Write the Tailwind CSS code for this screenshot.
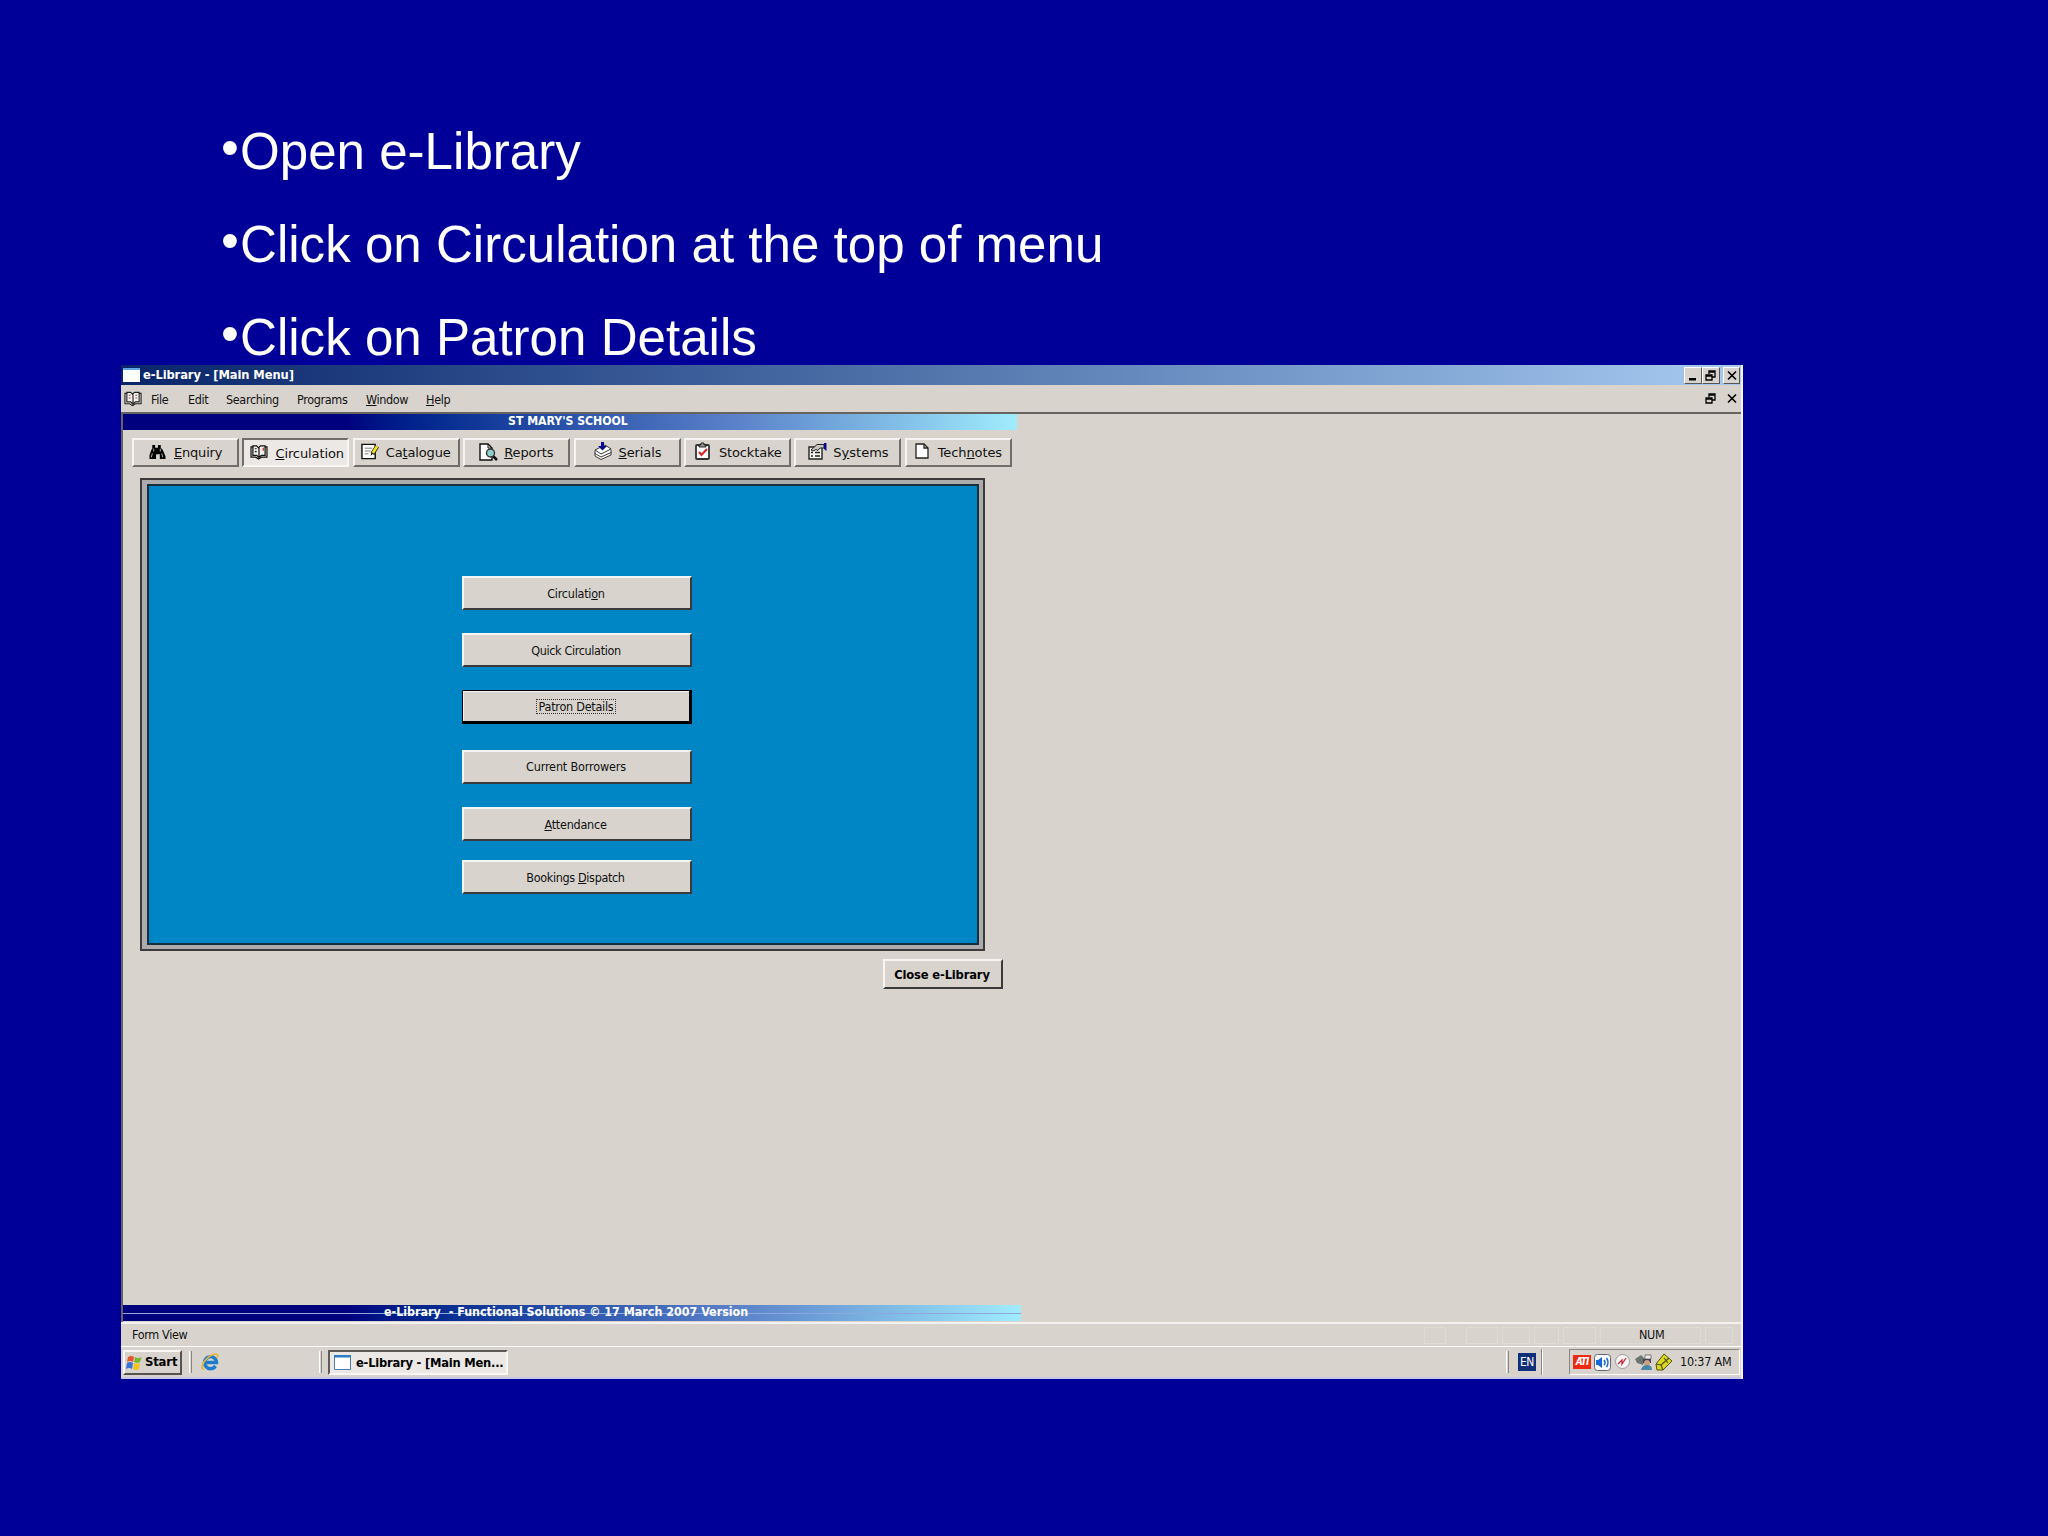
<!DOCTYPE html>
<html lang="en">
<head>
    <meta charset="UTF-8" />
    <meta name="viewport" content="width=device-width, initial-scale=1.0" />
    <title>e-Library - Patron Details</title>
    <script src="https://cdn.jsdelivr.net/npm/@tailwindcss/browser@4"></script>
</head>
<body class="bg-[#000099] w-[2048px] h-[1536px] overflow-hidden">
    <!-- Instructions -->
    <ul class="pt-[105px] pl-[222px] h-[365px] text-white text-[51.1px] leading-[93.1px] whitespace-nowrap font-['Liberation_Sans',sans-serif]">
        <li class="flex"><span class="w-[18px] -mt-[4px] -ml-px mr-px">•</span>Open e-Library</li>
        <li class="flex"><span class="w-[18px] -mt-[4px] -ml-px mr-px">•</span>Click on Circulation at the top of menu</li>
        <li class="flex"><span class="w-[18px] -mt-[4px] -ml-px mr-px">•</span>Click on Patron Details</li>
    </ul>

    <!-- Application window -->
    <div class="relative ml-[121px] w-[1622px] h-[1014px] flex flex-col bg-[#d8d4cd] border-r-2 border-r-[#f4f2f0] text-[#111] text-[12.5px] whitespace-nowrap font-['DejaVu_Sans_Condensed','DejaVu_Sans',sans-serif]">
        <!-- Title bar -->
        <header class="h-[20px] flex items-center justify-between bg-linear-to-r from-[#0a246a] to-[#a6caf0] pr-[1px] pl-[2px]">
            <div class="flex items-center">
                <svg class="w-[17px] h-[14px]" viewBox="0 0 17 14"><path fill="#fff" d="M0 0h17v14H0z"/><path fill="#5fa5e8" d="M0 0h17v2H0z"/></svg>
                <h1 class="ml-[3px] text-white font-bold text-[12.8px] leading-[18px] tracking-[-0.1px]">e-Library - [Main Menu]</h1>
            </div>
            <div class="flex">
                <div class="w-[18px] h-[17px] bg-[#d8d4cd] border border-t-white border-l-white border-r-[#555] border-b-[#555]">
                    <svg class="w-[16px] h-[15px]" viewBox="0 0 16 15"><path fill="#000" d="M4 10h7v2.500H4z"/></svg>
                </div>
                <div class="w-[18px] h-[17px] bg-[#d8d4cd] border border-t-white border-l-white border-r-[#555] border-b-[#555]">
                    <svg class="w-[16px] h-[15px]" viewBox="0 0 16 15" fill="none" stroke="#000" stroke-width="1.300"><path d="M6 6V3h6v6h-3M6 4h6M3 7h6v5H3zM3 8h6"/></svg>
                </div>
                <div class="ml-[3px] w-[17px] h-[17px] bg-[#d8d4cd] border border-t-white border-l-white border-r-[#555] border-b-[#555]">
                    <svg class="w-[15px] h-[15px]" viewBox="0 0 15 15" fill="none" stroke="#000" stroke-width="1.600"><path d="M4 3.500l8 8M12 3.500l-8 8"/></svg>
                </div>
            </div>
        </header>

        <!-- Menu bar -->
        <nav class="h-[27px] flex items-center pl-[3px] pr-[2px] tracking-[-0.35px]">
            <svg class="w-[18px] h-[16px]" viewBox="0 0 19 16" fill="#f4f2ee" stroke="#222" stroke-width="1.200"><path d="M1 2h2v-1h4l2 2 2-2h5v1h2v11h-6l-3 2-3-2H1z"/><path d="M9.500 3v12M3 2v9h4l2 2M16 2v9h-4l-2 2"/><path stroke="#a44" d="M5 4h2M5 7h2M12 4h2M12 7h2"/></svg>
            <span class="ml-[9px] mt-[3px] w-[37px]">File</span>
            <span class="mt-[3px] w-[38px]">Edit</span>
            <span class="mt-[3px] w-[71px]">Searching</span>
            <span class="mt-[3px] w-[69px]">Programs</span>
            <span class="mt-[3px] w-[60px]"><u>W</u>indow</span>
            <span class="mt-[3px]"><u>H</u>elp</span>
            <svg class="ml-auto w-[16px] h-[15px]" viewBox="0 0 16 15" fill="none" stroke="#000" stroke-width="1.300"><path d="M6 6V3h6v6h-3M6 4h6M3 7h6v5H3zM3 8h6"/></svg>
            <svg class="ml-[5px] w-[15px] h-[15px]" viewBox="0 0 15 15" fill="none" stroke="#000" stroke-width="1.600"><path d="M4 3.500l8 8M12 3.500l-8 8"/></svg>
        </nav>

        <!-- Form area -->
        <main class="h-[910px] border-t-2 border-l-2 border-[#66645f]">
            <h2 class="w-[894px] h-[16px] pl-[385px] bg-linear-to-r from-[#00007f] from-25% via-[#5a80c8] via-68% to-[#a0ecfc] text-white font-bold text-[12.2px] leading-[14px] tracking-[-0.02px]">ST MARY'S SCHOOL</h2>

            <!-- Tabs -->
            <div class="mt-[8px] ml-[9px] flex gap-[3.4px] text-[13px] leading-[27px] font-['DejaVu_Sans',sans-serif]">
                <div class="w-[107px] h-[29px] flex items-center border-2 border-t-[#f6f4f2] border-l-[#f6f4f2] border-r-[#6f6c69] border-b-[#6f6c69]">
                    <svg class="ml-[14px] -mt-[2px] w-[18px] h-[16px]" viewBox="0 0 18 17"><path d="M4 1h3v3h3V1h3v3l2 2 3 7v3h-6v-5H8v5H1v-4l2-6 1-1z"/><path stroke="#bbb" d="M5.500 5v3M12.500 5v3M4 10l-1 4M14 10l1 4"/></svg>
                    <span class="ml-[8px] tracking-[-0.2px]"><u>E</u>nquiry</span>
                </div>
                <div class="w-[107px] h-[29px] flex items-center bg-[#ebe8e5] border-2 border-t-[#6f6c69] border-l-[#6f6c69] border-r-[#f8f7f6] border-b-[#f8f7f6]">
                    <svg class="ml-[6px] w-[18px] h-[15px]" viewBox="0 0 19 16" fill="#f4f2ee" stroke="#111" stroke-width="1.300"><path d="M1 2h2v-1h4l2 2 2-2h5v1h2v11h-6l-3 2-3-2H1z"/><path d="M9.500 3v12M3 2v9h4l2 2M16 2v9h-4l-2 2M5 4h2M5 7h2"/><path stroke="#c22" d="M14 3v3"/></svg>
                    <span class="ml-[7px] mt-[2px] tracking-[-0.1px]"><u>C</u>irculation</span>
                </div>
                <div class="w-[107px] h-[29px] flex items-center border-2 border-t-[#f6f4f2] border-l-[#f6f4f2] border-r-[#6f6c69] border-b-[#6f6c69]">
                    <svg class="ml-[6px] -mt-[3px] w-[18px] h-[17px]" viewBox="0 0 19 17"><path fill="#fff" stroke="#111" stroke-width="1.500" d="M1 1h14v15H1z"/><path stroke="#777" d="M4 5h8M4 8h6M4 11h4"/><path stroke="#222" stroke-width="4.500" d="M17 3l-5 8"/><path stroke="#f2e21c" stroke-width="3" d="M17 3l-4.500 7"/><path d="M10 13l1-3 2 1z"/></svg>
                    <span class="ml-[7px] tracking-[-0.15px]">Ca<u>t</u>alogue</span>
                </div>
                <div class="w-[107px] h-[29px] flex items-center border-2 border-t-[#f6f4f2] border-l-[#f6f4f2] border-r-[#6f6c69] border-b-[#6f6c69]">
                    <svg class="ml-[14px] -mt-[2px] w-[19px] h-[18px]" viewBox="0 0 19 18"><path fill="#fff" stroke="#111" stroke-width="1.400" d="M1 1h8l4 4v12H1z"/><path fill="none" stroke="#111" d="M9 1v4h4"/><path stroke="#111" stroke-width="2.500" d="M14 13l4 4"/><circle cx="11.500" cy="10" r="4" fill="#8fd0cc" stroke="#333" stroke-width="1.400"/></svg>
                    <span class="ml-[6px] tracking-[-0.1px]"><u>R</u>eports</span>
                </div>
                <div class="w-[107px] h-[29px] flex items-center border-2 border-t-[#f6f4f2] border-l-[#f6f4f2] border-r-[#6f6c69] border-b-[#6f6c69]">
                    <svg class="ml-[18px] -mt-[3px] w-[18px] h-[18px]" viewBox="0 0 18 18"><path fill="#fff" stroke="#222" stroke-width=".9" d="M1 11v3l6 3.500L17 13v-3"/><path fill="#fff" stroke="#222" stroke-width=".9" d="M1 8.500v3L7 15l10-4.500v-3"/><path fill="#fff" stroke="#222" stroke-width=".9" d="M1 8l6 4 10-5-6-4z"/><path fill="#0a0a90" d="M7 0h3v4h3L8.500 8.500 4 4h3z"/></svg>
                    <span class="ml-[7px] tracking-[-0.1px]"><u>S</u>erials</span>
                </div>
                <div class="w-[107px] h-[29px] flex items-center border-2 border-t-[#f6f4f2] border-l-[#f6f4f2] border-r-[#6f6c69] border-b-[#6f6c69]">
                    <svg class="ml-[9px] -mt-[3px] w-[16px] h-[18px]" viewBox="0 0 16 18"><rect x="1" y="3" width="13" height="14" rx="1" fill="#fff" stroke="#333" stroke-width="1.800"/><path fill="#999" stroke="#222" d="M4 5V3h2V1h3v2h2v2z"/><path fill="none" stroke="#e02020" stroke-width="2" d="M4 10l2.500 3L12 7"/></svg>
                    <span class="ml-[8px] tracking-[-0.15px]">Stocktake</span>
                </div>
                <div class="w-[107px] h-[29px] flex items-center border-2 border-t-[#f6f4f2] border-l-[#f6f4f2] border-r-[#6f6c69] border-b-[#6f6c69]">
                    <svg class="ml-[12px] -mt-[3px] w-[19px] h-[17px]" viewBox="0 0 19 17"><path fill="#f4f4f0" stroke="#222" stroke-width="1.400" d="M1 4h13v12H1z"/><path stroke="#222" stroke-width="1.300" d="M3 9.500h2M7 9.500h5M3 13h2M7 13h5"/><path fill="#c8c6c0" stroke="#222" d="M3 7l6-5.500h7V5h-4l-2 2.500-2-1L5 8z"/><path fill="#0a0a90" d="M16 0h2.500v8L16 6z"/></svg>
                    <span class="ml-[6px]">S<u>y</u>stems</span>
                </div>
                <div class="w-[107px] h-[29px] flex items-center border-2 border-t-[#f6f4f2] border-l-[#f6f4f2] border-r-[#6f6c69] border-b-[#6f6c69]">
                    <svg class="ml-[8px] -mt-[3px] w-[14px] h-[16px]" viewBox="0 0 14 16"><path fill="#fff" stroke="#222" stroke-width="1.300" d="M1 1h8l4 4v10H1z"/><path fill="none" stroke="#222" stroke-width="1.300" d="M9 1v4h4"/></svg>
                    <span class="ml-[9px] tracking-[-0.1px]">Tech<u>n</u>otes</span>
                </div>
            </div>

            <!-- Circulation panel -->
            <div class="mt-[11px] ml-[17px] w-[845px] h-[473px] border-2 border-[#3c3a3a] bg-[#aeabac] pl-[5px] pr-[4px] pt-[4px] pb-[4px]">
                <div class="h-full border-2 border-[#15303c] bg-[#0086c4] flex flex-col pl-[313px] pt-[90px] text-center leading-[30px] tracking-[-0.25px]">
                    <button class="w-[230px] h-[34px] shrink-0 bg-[#d8d4cd] border-2 border-t-[#f4f6f6] border-l-[#f4f6f6] border-r-[#3a3a3a] border-b-[#3a3a3a] pt-px pr-[2px]">Circulati<u>o</u>n</button>
                    <button class="mt-[23px] w-[230px] h-[34px] shrink-0 bg-[#d8d4cd] border-2 border-t-[#f4f6f6] border-l-[#f4f6f6] border-r-[#3a3a3a] border-b-[#3a3a3a] pt-px pr-[2px] tracking-[-0.35px]">Quick Circulation</button>
                    <button class="mt-[23px] w-[230px] h-[34px] shrink-0 bg-[#d8d4cd] border border-r-[3px] border-b-[3px] border-black shadow-[inset_1px_1px_0_#f4f6f6] pt-px"><span class="inline-block leading-[13px] px-[2px] border border-dotted border-[#333]">Patron Details</span></button>
                    <button class="mt-[26px] w-[230px] h-[34px] shrink-0 bg-[#d8d4cd] border-2 border-t-[#f4f6f6] border-l-[#f4f6f6] border-r-[#3a3a3a] border-b-[#3a3a3a] pr-[2px] tracking-[-0.15px]">Current Borrowers</button>
                    <button class="mt-[23px] w-[230px] h-[34px] shrink-0 bg-[#d8d4cd] border-2 border-t-[#f4f6f6] border-l-[#f4f6f6] border-r-[#3a3a3a] border-b-[#3a3a3a] pt-px pr-[3px]"><u>A</u>ttendance</button>
                    <button class="mt-[19px] w-[230px] h-[34px] shrink-0 bg-[#d8d4cd] border-2 border-t-[#f4f6f6] border-l-[#f4f6f6] border-r-[#3a3a3a] border-b-[#3a3a3a] pt-px pr-[3px] tracking-[-0.35px]">Bookings <u>D</u>ispatch</button>
                </div>
            </div>
            <button class="block mt-[8px] ml-[760px] w-[120px] h-[30px] border-2 border-t-[#f8f6f4] border-l-[#f8f6f4] border-r-[#3a3a3a] border-b-[#3a3a3a] font-bold text-[12.8px] leading-[26px] tracking-[-0.15px] pt-px pr-[2px] text-black">Close e-Library</button>

            <div class="relative mt-[316px] w-[898px] h-[16px] pl-[261px] bg-linear-to-r from-[#00007f] from-25% via-[#5a80c8] via-68% to-[#a0ecfc] text-white font-bold text-[12.4px] leading-[14px]">
                <div class="absolute left-0 top-[8px] w-full h-px bg-[#8fa8dc]"></div>
                <p class="relative whitespace-pre">e-Library  - Functional Solutions © 17 March 2007 Version</p>
            </div>
        </main>

        <!-- Status bar -->
        <div class="h-[24px] flex items-center border-t-2 border-[#f4f2f0] pl-[11px] pr-[8px] tracking-[-0.35px]">
            <span>Form View</span>
            <div class="ml-auto flex items-center gap-[4px]">
                <div class="w-[22px] h-[17px] border border-[#dfdbd5] mr-[16px]"></div>
                <div class="w-[32px] h-[17px] border border-[#dfdbd5]"></div>
                <div class="w-[28px] h-[17px] border border-[#dfdbd5]"></div>
                <div class="w-[25px] h-[17px] border border-[#dfdbd5]"></div>
                <div class="w-[33px] h-[17px] border border-[#dfdbd5]"></div>
                <div class="w-[101px] h-[17px] border border-[#dfdbd5] pl-[38px] leading-[14px]">NUM</div>
                <div class="w-[28px] h-[17px] border border-[#dfdbd5]"></div>
            </div>
        </div>

        <!-- Taskbar -->
        <footer class="h-[33px] flex items-center border-t border-t-white border-b-2 border-b-[#c8c6e8] pl-[2px] pr-[1px]">
            <button class="w-[59px] h-[25px] flex items-center border-2 border-t-[#f8f6f4] border-l-[#f8f6f4] border-r-[#55524f] border-b-[#55524f]">
                <svg class="w-[18px] h-[17px]" viewBox="0 0 18 17"><path fill="#e4572a" d="M3 3q3-2 6 0L8 8Q5 6 2 8z"/><path fill="#7db832" d="M10 3q3 2 7 0l-2 5q-3 2-6 0z"/><path fill="#3a72d4" d="M2 9q3-2 6 0l-1 6q-3-2-6 0z"/><path fill="#f3c21b" d="M9 9q3 2 6 0l-1 6q-3 2-6 0z"/></svg>
                <span class="ml-[2px] font-bold text-[13px] leading-[20px] tracking-[-0.2px] text-black">Start</span>
            </button>
            <div class="ml-[7px] w-[3px] h-[22px] border-l border-l-white border-r border-r-[#8a8784]"></div>
            <svg class="ml-[9px] w-[18px] h-[18px]" viewBox="0 0 18 18" fill="none"><path stroke="#1e7ccc" stroke-width="3.400" d="M14.500 13a6 6 0 1 1 1-3.500H5"/><path stroke="#e8b430" stroke-width="1.600" d="M3 16Q-1 16 3 9 9 1 15 1q3 1 1 4"/></svg>
            <div class="ml-[100px] w-[3px] h-[22px] border-l border-l-white border-r border-r-[#8a8784]"></div>
            <div class="ml-[6px] w-[180px] h-[25px] flex items-center bg-[#ebe8e5] border-2 border-t-[#5c5a57] border-l-[#5c5a57] border-r-[#f8f7f6] border-b-[#f8f7f6]">
                <svg class="ml-[4px] w-[17px] h-[15px]" viewBox="0 0 17 15"><path fill="#fff" stroke="#4a7fbb" d="M.5.5h16v14H.5z"/><path fill="#2f7cc4" d="M0 0h17v2.500H0z"/></svg>
                <span class="ml-[5px] mt-[1px] font-bold text-[12.800px] leading-[20px] tracking-[-0.22px] text-black">e-Library - [Main Men...</span>
            </div>

            <div class="ml-auto w-[3px] h-[22px] border-l border-l-white border-r border-r-[#8a8784]"></div>
            <div class="ml-[9px] w-[18px] h-[18px] bg-[#0f2f78] text-white text-center leading-[18px] text-[12px] tracking-[-0.5px]">EN</div>
            <div class="ml-[5px] w-[2px] h-[26px] border-l border-l-[#8a8784] border-r border-r-white"></div>
            <div class="ml-[26px] w-[171px] h-[26px] flex items-center border border-t-[#8a8784] border-l-[#8a8784] border-r-white border-b-white pl-[3px]">
                <div class="w-[18px] h-[14px] bg-[#ee2a12] text-white text-center font-bold italic text-[10px] leading-[14px] tracking-[-1px]">ATI</div>
                <svg class="ml-[3px] w-[17px] h-[17px]" viewBox="0 0 17 17"><rect x=".5" y=".5" width="16" height="16" rx="3" fill="#f8faff" stroke="#667"/><path fill="#1668d4" d="M2 6h2l4-3v11l-4-3H2z"/><path fill="none" stroke="#1668d4" stroke-width="1.500" d="M10 6q2 2.500 0 5M12.500 4q3 4.500 0 9"/></svg>
                <svg class="ml-[4px] w-[15px] h-[15px] -mt-[2px]" viewBox="0 0 15 15"><circle cx="7.500" cy="7.500" r="7" fill="#f8f4f4" stroke="#999"/><path fill="none" stroke="#c8283c" stroke-width="1.300" d="M3 10l4-4v4l4-6"/></svg>
                <svg class="ml-[5px] w-[18px] h-[18px]" viewBox="0 0 18 18"><path fill="#6d7570" d="M0 6l6-4 4 4-2 6-6-2z"/><path fill="#eee" stroke="#777" d="M10 2h6v4h-6z"/><path fill="#445" d="M8 6h8v4H8z"/><circle cx="12" cy="10" r="3" fill="#c9a184"/><path fill="#4c86a8" d="M6 17q1-5 6-5t5 5z"/></svg>
                <svg class="ml-[2px] w-[18px] h-[18px]" viewBox="0 0 18 18"><path fill="#dcd81c" stroke="#55520a" d="M9 1l8 7-9 9H2l-1-6z"/><path fill="none" stroke="#55520a" stroke-width="1.200" d="M1 11l5 1 2 5M6 12l8-7M9 5l4 5"/></svg>
                <span class="ml-[7px] mt-[1px] tracking-[-0.25px]">10:37 AM</span>
            </div>
        </footer>
    </div>
</body>
</html>
